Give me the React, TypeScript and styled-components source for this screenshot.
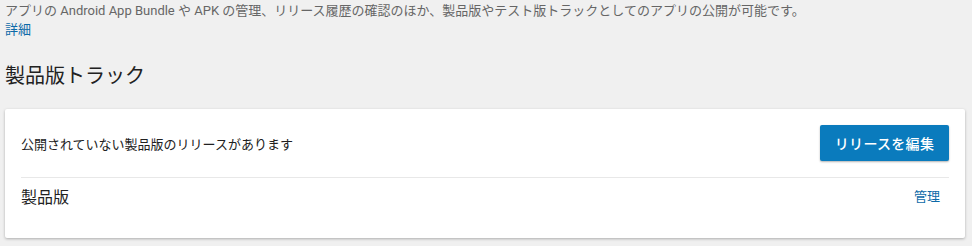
import styled, { createGlobalStyle } from "styled-components";

const GlobalStyle = createGlobalStyle`
  html, body {
    margin: 0;
    padding: 0;
    background: #f0f0f0;
  }
  body {
    font-family: Roboto, "Noto Sans CJK JP", sans-serif;
    color: #212121;
  }
`;

export default function App() {
  return (
    <Page>
      <GlobalStyle />
      <Intro>
        アプリの Android App Bundle や APK の管理、リリース履歴の確認のほか、製品版やテスト版トラックとしてのアプリの公開が可能です。
      </Intro>
      <Link href="#">詳細</Link>
      <Title>製品版トラック</Title>
      <Card>
        <NoticeRow>
          <Notice>公開されていない製品版のリリースがあります</Notice>
          <Button>リリースを編集</Button>
        </NoticeRow>
        <TrackRow>
          <TrackName>製品版</TrackName>
          <Link href="#">管理</Link>
        </TrackRow>
      </Card>
    </Page>
  );
}

const Page = styled.div`
  padding: 1px 7px 8px 5px;
  display: flex;
  flex-direction: column;
  align-items: flex-start;
`;

const Intro = styled.p`
  margin: 0;
  font-size: 13px;
  line-height: 19px;
  color: #666;
`;

const Link = styled.a`
  font-size: 13px;
  line-height: 19px;
  color: #0d6aa8;
  text-decoration: none;
`;

const Title = styled.h2`
  margin: 23px 0 19px;
  font-size: 20px;
  line-height: 28px;
  font-weight: 400;
  color: #212121;
`;

const Card = styled.div`
  align-self: stretch;
  background: #fff;
  border-radius: 2px;
  box-shadow: 0 1px 3px rgba(0, 0, 0, 0.28);
  padding: 0 16px 28px;
`;

const NoticeRow = styled.div`
  display: flex;
  justify-content: space-between;
  align-items: center;
  padding: 16px 0;
  border-bottom: 1px solid #e8e8e8;
`;

const Notice = styled.span`
  font-size: 13px;
  color: #212121;
`;

const Button = styled.button`
  height: 36px;
  width: 129px;
  border: none;
  border-radius: 2px;
  background: #0a7bbd;
  color: #fff;
  font-family: inherit;
  font-size: 14px;
  font-weight: 500;
  letter-spacing: 0.3px;
  box-shadow: 0 1px 2px rgba(0, 0, 0, 0.3);
  cursor: pointer;
`;

const TrackRow = styled.div`
  display: flex;
  justify-content: space-between;
  align-items: center;
  padding: 4px 9px 0 0;
  height: 28px;
`;

const TrackName = styled.span`
  font-size: 16px;
  color: #212121;
`;
